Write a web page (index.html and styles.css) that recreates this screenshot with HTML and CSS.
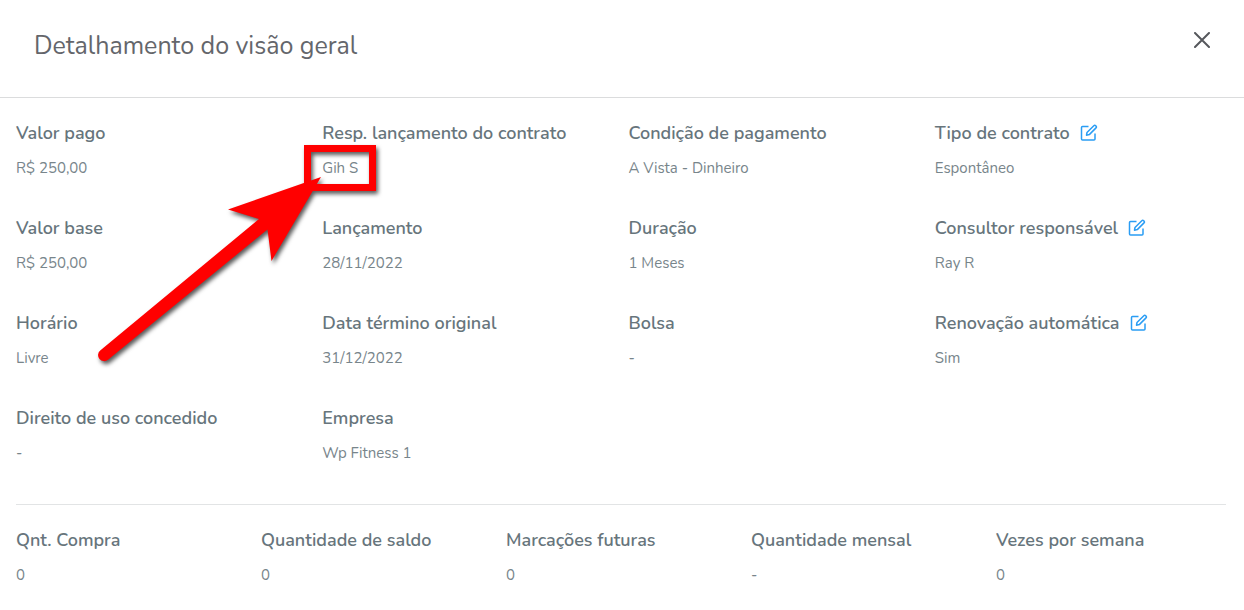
FILE: index.html
```html
<!DOCTYPE html>
<html lang="pt-BR">
<head>
  <meta charset="UTF-8">
  <meta name="viewport" content="width=device-width, initial-scale=1.0">
  <title>Detalhamento do visão geral</title>
  <link rel="stylesheet" href="styles.css">
</head>
<body>
  <svg class="sprite" aria-hidden="true">
    <symbol id="edit" viewBox="0 0 18 18">
      <path d="M8.500 2.500H2.500Q1.500 2.500 1.500 3.500V15Q1.500 16 2.500 16H14Q15 16 15 15V9.500"/>
      <path d="M6.500 11.200 7 8.500 13.800 1.700Q14.700 .900 15.900 1.900Q16.900 3 16 3.900L9.300 10.600Z"/>
    </symbol>
  </svg>

  <header class="modal-header">
    <h1>Detalhamento do visão geral</h1>
    <button class="close" type="button" aria-label="Fechar">
      <svg viewBox="0 0 16 16"><path d="M1 1 15 15M15 1 1 15"/></svg>
    </button>
  </header>

  <main class="modal-body">
    <dl class="details">
      <div class="item"><dt>Valor pago</dt><dd>R$ 250,00</dd></div>
      <div class="item">
        <dt>Resp. lançamento do contrato</dt>
        <dd class="marked">Gih S
          <svg class="arrow" viewBox="0 0 310 240" aria-hidden="true">
            <rect x="217.500" y="8.500" width="65" height="39"/>
            <path d="M231 37 138 69.500 169 79 10.200 210.500A6 6 0 0 0 18 219.700L177.500 89.500 181.500 121Z"/>
          </svg>
        </dd>
      </div>
      <div class="item"><dt>Condição de pagamento</dt><dd>A Vista - Dinheiro</dd></div>
      <div class="item">
        <dt>Tipo de contrato <button class="edit" type="button" aria-label="Editar tipo de contrato"><svg><use href="#edit"/></svg></button></dt>
        <dd>Espontâneo</dd>
      </div>

      <div class="item"><dt>Valor base</dt><dd>R$ 250,00</dd></div>
      <div class="item"><dt>Lançamento</dt><dd>28/11/2022</dd></div>
      <div class="item"><dt>Duração</dt><dd>1 Meses</dd></div>
      <div class="item">
        <dt>Consultor responsável <button class="edit" type="button" aria-label="Editar consultor responsável"><svg><use href="#edit"/></svg></button></dt>
        <dd>Ray R</dd>
      </div>

      <div class="item"><dt>Horário</dt><dd>Livre</dd></div>
      <div class="item"><dt>Data término original</dt><dd>31/12/2022</dd></div>
      <div class="item"><dt>Bolsa</dt><dd>-</dd></div>
      <div class="item">
        <dt>Renovação automática <button class="edit" type="button" aria-label="Editar renovação automática"><svg><use href="#edit"/></svg></button></dt>
        <dd>Sim</dd>
      </div>

      <div class="item"><dt>Direito de uso concedido</dt><dd>-</dd></div>
      <div class="item"><dt>Empresa</dt><dd>Wp Fitness 1</dd></div>
    </dl>

    <hr>

    <dl class="details credits">
      <div class="item"><dt>Qnt. Compra</dt><dd>0</dd></div>
      <div class="item"><dt>Quantidade de saldo</dt><dd>0</dd></div>
      <div class="item"><dt>Marcações futuras</dt><dd>0</dd></div>
      <div class="item"><dt>Quantidade mensal</dt><dd>-</dd></div>
      <div class="item"><dt>Vezes por semana</dt><dd>0</dd></div>
    </dl>
  </main>
</body>
</html>
```
FILE: styles.css
```css
* { box-sizing: border-box; }
body { margin: 0; background: #fff; color: #67757c; font-family: Nunito, "Open Sans", sans-serif; }
button { padding: 0; border: 0; background: none; cursor: pointer; }
svg { display: block; fill: none; stroke: currentColor; }
.sprite { display: none; }

.modal-header { display: flex; justify-content: space-between; align-items: flex-start; padding: 28px 34px; border-bottom: 1px solid #dbdcdd; color: #56585d; }
.modal-header h1 { margin: 0; font-size: 25px; line-height: 36px; padding-bottom: 5px; font-weight: 400; color: #64666b; }
.close { margin-top: 4px; color: #56585d; }
.close svg { width: 16px; height: 16px; stroke-width: 2; stroke-linecap: round; }

.modal-body { padding: 23px 3px 16px 16px; }
.details { display: grid; grid-template-columns: repeat(4, 1fr); row-gap: 37px; margin: 0; }
.credits { grid-template-columns: repeat(5, 1fr); }
dt { display: flex; align-items: center; gap: 10px; font-size: 18px; line-height: 25px; font-weight: 600; }
dd { margin: 11px 0 0; font-size: 15px; line-height: 22px; font-weight: 400; color: #78858b; }
hr { margin: 40px 15px 23px 0; border: 0; border-top: 1px solid #e2e4e5; }

.edit { color: #2a9df4; }
.edit svg { width: 18px; height: 18px; margin-bottom: 2px; stroke-width: 1.5; stroke-linejoin: round; }

/* highlight box and arrow over the value */
.marked { position: relative; }
.arrow { position: absolute; left: -232px; top: -17px; width: 310px; height: 240px; overflow: visible; pointer-events: none; filter: drop-shadow(2px 3px 2px rgba(0, 0, 0, .65)); }
.arrow rect { stroke: #f00; stroke-width: 7; }
.arrow path { fill: #f00; stroke: none; }
```
